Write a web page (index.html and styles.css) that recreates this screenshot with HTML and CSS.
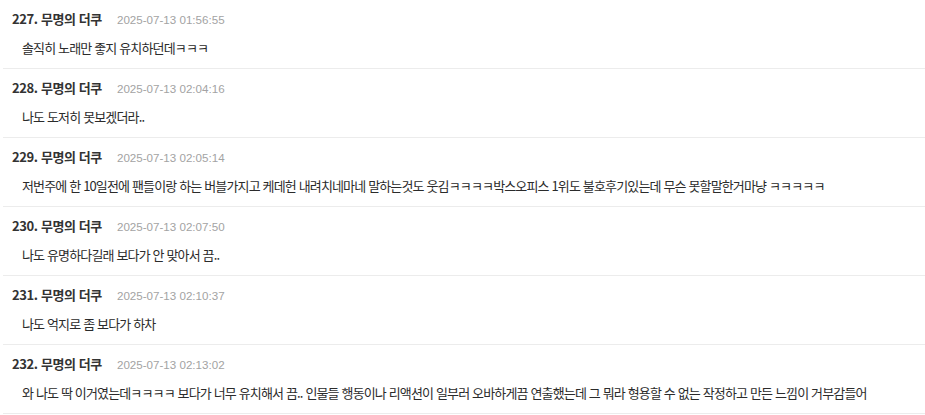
FILE: index.html
```html
<!DOCTYPE html>
<html lang="ko">
<head>
  <meta charset="UTF-8">
  <meta name="viewport" content="width=device-width, initial-scale=1.0">
  <title>댓글</title>
  <link rel="stylesheet" href="styles.css">
</head>
<body>
  <div class="comment-list">

    <div class="comment">
      <div class="comment-head">
        <span class="comment-author">227. 무명의 더쿠</span>
        <span class="comment-date">2025-07-13 01:56:55</span>
      </div>
      <div class="comment-body">솔직히 노래만 좋지 유치하던데ㅋㅋㅋ</div>
    </div>

    <div class="comment">
      <div class="comment-head">
        <span class="comment-author">228. 무명의 더쿠</span>
        <span class="comment-date">2025-07-13 02:04:16</span>
      </div>
      <div class="comment-body">나도 도저히 못보겠더라..</div>
    </div>

    <div class="comment">
      <div class="comment-head">
        <span class="comment-author">229. 무명의 더쿠</span>
        <span class="comment-date">2025-07-13 02:05:14</span>
      </div>
      <div class="comment-body">저번주에 한 10일전에 팬들이랑 하는 버블가지고 케데헌 내려치네마네 말하는것도 웃김ㅋㅋㅋㅋ박스오피스 1위도 불호후기있는데 무슨 못할말한거마냥 ㅋㅋㅋㅋㅋ</div>
    </div>

    <div class="comment">
      <div class="comment-head">
        <span class="comment-author">230. 무명의 더쿠</span>
        <span class="comment-date">2025-07-13 02:07:50</span>
      </div>
      <div class="comment-body">나도 유명하다길래 보다가 안 맞아서 끔..</div>
    </div>

    <div class="comment">
      <div class="comment-head">
        <span class="comment-author">231. 무명의 더쿠</span>
        <span class="comment-date">2025-07-13 02:10:37</span>
      </div>
      <div class="comment-body">나도 억지로 좀 보다가 하차</div>
    </div>

    <div class="comment">
      <div class="comment-head">
        <span class="comment-author">232. 무명의 더쿠</span>
        <span class="comment-date">2025-07-13 02:13:02</span>
      </div>
      <div class="comment-body">와 나도 딱 이거였는데ㅋㅋㅋㅋ 보다가 너무 유치해서 끔.. 인물들 행동이나 리액션이 일부러 오바하게끔 연출했는데 그 뭐라 형용할 수 없는 작정하고 만든 느낌이 거부감들어</div>
    </div>

  </div>
</body>
</html>
```

FILE: styles.css
```css
body {
  margin: 0;
  background: #fff;
  color: #333;
  font-family: "Noto Sans CJK KR", "Noto Sans", sans-serif;
  overflow: hidden;
}

.comment-list {
  padding-left: 3px;
}

.comment {
  padding: 9px 12px 10px 9px;
  border-bottom: 1px solid #ececec;
}

.comment-head {
  display: flex;
  align-items: baseline;
  height: 20px;
  line-height: 20px;
}

.comment-author {
  font-size: 13px;
  font-weight: bold;
  letter-spacing: -0.4px;
  color: #333;
}

.comment-date {
  margin-left: 15px;
  font-size: 11.6px;
  color: #a3a3a3;
  font-family: "Liberation Sans", Arial, sans-serif;
}

.comment-body {
  margin-top: 8px;
  padding-left: 10px;
  font-size: 13px;
  letter-spacing: -0.85px;
  line-height: 21px;
  color: #2b2b2b;
  white-space: nowrap;
}
```
